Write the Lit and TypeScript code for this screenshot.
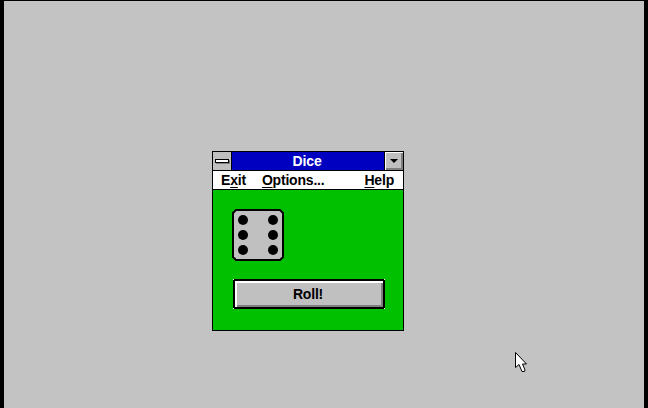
import { LitElement, html, css } from "lit";
import { customElement } from "lit/decorators.js";

@customElement("app-root")
export class AppRoot extends LitElement {
  static styles = css`
    :host { display: block; width: 648px; height: 408px; overflow: hidden; }
    .screen {
      position: relative; box-sizing: border-box; width: 648px; height: 408px;
      background: repeating-conic-gradient(#c0c0c0 0 25%, #c6c6c6 0 50%) 0 0 / 2px 2px;
      border-style: solid; border-color: #000;
      border-width: 1px 4px 0 4px;
      font-family: "Liberation Sans", Arial, sans-serif; font-weight: 700; font-size: 14px; color: #000;
    }
    .window {
      position: absolute; left: 208px; top: 150px; box-sizing: border-box;
      width: 192px; height: 180px; border: 1px solid #000; background: #00c000;
      display: flex; flex-direction: column;
    }
    .title { display: flex; height: 19px; flex: none; box-sizing: border-box; border-bottom: 1px solid #000; }
    .sys { width: 18px; flex: none; background: #c0c0c0; border-right: 1px solid #000; display: flex; align-items: center; justify-content: center; }
    .sys i { display: block; box-sizing: border-box; width: 14px; height: 4px; border: 1px solid #000; background: #fff; box-shadow: 1px 1px 0 #808080; }
    .caption { flex: 1; background: #0000c0; color: #fff; text-align: center; line-height: 18px; letter-spacing: -0.1px; padding-right: 2px; }
    .minbtn {
      width: 19px; flex: none; box-sizing: border-box; background: #c0c0c0; border-left: 1px solid #000;
      box-shadow: inset 1px 1px 0 #fff, inset -2px -2px 0 #808080;
      display: flex; align-items: center; justify-content: center;
    }
    .minbtn i { display: block; width: 0; height: 0; border-left: 4px solid transparent; border-right: 4px solid transparent; border-top: 4px solid #000; }
    .menu { display: flex; height: 19px; flex: none; box-sizing: border-box; background: #fff; border-bottom: 1px solid #000; padding: 0 9px 0 8px; line-height: 18px; letter-spacing: -0.2px; }
    .menu span { white-space: nowrap; }
    .menu .options { margin-left: 16px; }
    .menu .help { margin-left: auto; }
    u { text-underline-offset: 2px; text-decoration-thickness: 1px; }
    .content { flex: 1; display: flex; flex-direction: column; padding: 19px 18px 0 19px; }
    .die { display: block; flex: none; }
    .roll {
      position: relative; margin: 18px 0 0 1px; flex: none; box-sizing: border-box; width: 152px; height: 30px;
      background: #c0c0c0; border: 2px solid #000; padding: 0 2px 0 0;
      box-shadow: inset 2px 2px 0 #fff, inset -2px -2px 0 #808080;
      font: inherit; color: #000; letter-spacing: -0.2px;
    }
    .roll::after {
      content: ""; position: absolute; inset: -2px;
      background:
        linear-gradient(#fff, #fff) 0 0 / 1px 1px no-repeat,
        linear-gradient(#fff, #fff) 100% 0 / 1px 1px no-repeat,
        linear-gradient(#fff, #fff) 0 100% / 1px 1px no-repeat,
        linear-gradient(#fff, #fff) 100% 100% / 1px 1px no-repeat;
    }
    .cursor { position: absolute; left: 510px; top: 350px; display: block; }
  `;

  render() {
    return html`
      <div class="screen">
        <div class="window">
          <div class="title">
            <div class="sys"><i></i></div>
            <div class="caption">Dice</div>
            <div class="minbtn"><i></i></div>
          </div>
          <div class="menu">
            <span>E<u>x</u>it</span>
            <span class="options"><u>O</u>ptions...</span>
            <span class="help"><u>H</u>elp</span>
          </div>
          <div class="content">
            <svg class="die" width="52" height="52" viewBox="0 0 52 52">
              <path d="M4 1H48L51 4V48L48 51H4L1 48V4Z" fill="#c0c0c0" stroke="#000" stroke-width="2" />
              <circle cx="11" cy="11" r="5" /><circle cx="41" cy="11" r="5" />
              <circle cx="11" cy="26" r="5" /><circle cx="41" cy="26" r="5" />
              <circle cx="11" cy="41" r="5" /><circle cx="41" cy="41" r="5" />
            </svg>
            <button class="roll">Roll!</button>
          </div>
        </div>
        <svg class="cursor" width="14" height="22" viewBox="0 0 14 22">
          <path d="M1.5 1.5V16.5L5 13.5L8 20.5H10.5L11 19L8.5 13H12.5Z" fill="#fff" stroke="#000" stroke-width="1" />
        </svg>
      </div>
    `;
  }
}
